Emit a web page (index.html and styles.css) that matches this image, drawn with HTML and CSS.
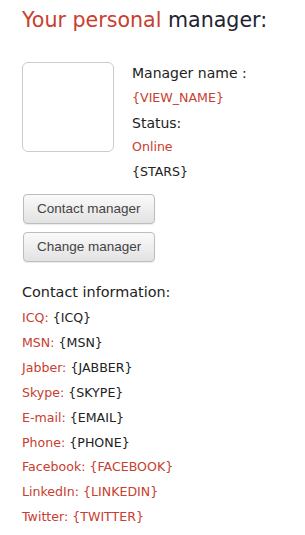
FILE: index.html
```html
<!DOCTYPE html>
<html lang="en">
<head>
    <meta charset="UTF-8">
    <meta name="viewport" content="width=device-width, initial-scale=1.0">
    <title>Your personal manager</title>
    <link rel="stylesheet" href="styles.css">
</head>
<body>

<div class="manager">
    <h2><span class="red">Your personal</span> manager:</h2>

    <!-- Manager card -->
    <div class="card">
        <div class="photo"></div>
        <div class="info">
            <div class="line">Manager name :</div>
            <div class="line red small">{VIEW_NAME}</div>
            <div class="line">Status:</div>
            <div class="line red small">Online</div>
            <div class="line small">{STARS}</div>
        </div>
    </div>

    <div class="buttons">
        <button class="btn">Contact manager</button>
        <button class="btn">Change manager</button>
    </div>

    <!-- Contacts -->
    <div class="contacts">
        <div class="title">Contact information:</div>
        <div class="row"><span class="red">ICQ:</span> {ICQ}</div>
        <div class="row"><span class="red">MSN:</span> {MSN}</div>
        <div class="row"><span class="red">Jabber:</span> {JABBER}</div>
        <div class="row"><span class="red">Skype:</span> {SKYPE}</div>
        <div class="row"><span class="red">E-mail:</span> {EMAIL}</div>
        <div class="row"><span class="red">Phone:</span> {PHONE}</div>
        <div class="row red">Facebook: {FACEBOOK}</div>
        <div class="row red">LinkedIn: {LINKEDIN}</div>
        <div class="row red">Twitter: {TWITTER}</div>
    </div>
</div>

</body>
</html>
```

FILE: styles.css
```css
body {
    font-family: "DejaVu Sans", Verdana, sans-serif;
    margin: 0;
    padding: 0;
    background-color: #fff;
    color: #222;
}
.manager {
    padding: 7px 0 0 22px;
}
.red {
    color: #c8402f;
}
h2 {
    font-size: 20.6px;
    font-weight: normal;
    margin: 0;
    line-height: 26px;
    color: #1e2530;
}
.card {
    display: flex;
    margin-top: 28px;
}
.photo {
    width: 90px;
    height: 88px;
    border: 1px solid #ccc;
    border-radius: 6px;
    margin-top: 1px;
}
.info {
    margin-left: 18px;
    margin-top: 0;
}
.line {
    font-size: 14px;
    line-height: 24.8px;
}
.line.small {
    font-size: 12.6px;
}
.buttons {
    margin-top: 9px;
    display: flex;
    flex-direction: column;
    align-items: flex-start;
    gap: 8px;
}
.btn {
    height: 30px;
    margin-left: 1px;
    padding: 0 13px;
    font-family: "Liberation Sans", Arial, sans-serif;
    font-size: 13.5px;
    color: #444;
    border: 1px solid #bdbdbd;
    border-radius: 4px;
    background: linear-gradient(#fafafa, #e2e2e2);
    box-shadow: 0 1px 1px rgba(0, 0, 0, 0.08);
}
.contacts {
    margin-top: 18px;
}
.contacts .title {
    font-size: 14.4px;
    line-height: 24px;
}
.row {
    font-size: 12.6px;
    line-height: 24.9px;
}
.contacts .title + .row {
    margin-top: 2px;
}
```
